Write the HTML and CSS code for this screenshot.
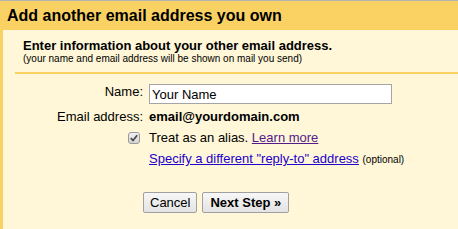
FILE: index.html
```html
<!DOCTYPE html>
<html lang="en">
<head>
    <meta charset="UTF-8">
    <title>Add another email address you own</title>
    <link rel="stylesheet" href="styles.css">
</head>
<body>
    <div class="dialog">
        <h1 class="dialog_title">Add another email address you own</h1>
        <div class="dialog_body">
            <div class="intro">
                <h2>Enter information about your other email address.</h2>
                <p>(your name and email address will be shown on mail you send)</p>
            </div>
            <form class="set_form">
                <label class="label" for="name">Name:</label>
                <div class="value">
                    <input type="text" id="name" class="txt_name" value="Your Name">
                </div>

                <span class="label">Email address:</span>
                <div class="value address">email@yourdomain.com</div>

                <span class="label">
                    <span class="check">
                        <svg width="12" height="12" viewBox="0 0 12 12">
                            <defs>
                                <linearGradient id="chk" x1="0" y1="0" x2="0" y2="1">
                                    <stop offset="0" stop-color="#f2f2f2"/>
                                    <stop offset="1" stop-color="#d4d4d4"/>
                                </linearGradient>
                            </defs>
                            <rect x="0.5" y="0.5" width="11" height="11" rx="2.5" fill="url(#chk)" stroke="#9a9a9a"/>
                            <path d="M2.8 6.2 L5 8.5 L9.2 3.3" fill="none" stroke="#4a4a4a" stroke-width="1.8"/>
                        </svg>
                    </span>
                </span>
                <div class="value">Treat as an alias. <a href="#" class="visited">Learn more</a></div>

                <span class="label"></span>
                <div class="value"><a href="#">Specify a different "reply-to" address</a> <small>(optional)</small></div>
            </form>
            <div class="line_submit">
                <button type="button">Cancel</button>
                <button type="button" class="next">Next Step &raquo;</button>
            </div>
        </div>
    </div>
</body>
</html>
```

FILE: styles.css
```css
html, body {
    margin: 0;
    height: 100%;
}
body {
    font-family: "Liberation Sans", Arial, sans-serif;
    font-size: 13px;
    color: #000;
    background-color: #fff7d7;
    border-top: 1px solid #b4b4b4;
    box-sizing: border-box;
}
.dialog {
    height: 100%;
    display: flex;
    flex-direction: column;
}
.dialog_title {
    margin: 0;
    height: 29px;
    line-height: 29px;
    padding-left: 7px;
    font-size: 16px;
    font-weight: bold;
    background-color: #fad163;
}
.dialog_body {
    flex: 1;
    border-left: 3px solid #fad163;
}
.intro {
    margin-left: 12px;
    padding: 8px 0 7px 8px;
    border-bottom: 2px solid #fad163;
}
.intro h2 {
    margin: 0;
    font-size: 13px;
    line-height: 15px;
    font-weight: bold;
}
.intro p {
    margin: 0;
    font-size: 10px;
    line-height: 12px;
}
.set_form {
    display: grid;
    grid-template-columns: 140px 1fr;
    column-gap: 6px;
    row-gap: 4px;
    margin-top: 10px;
    line-height: 17px;
}
.label {
    text-align: right;
}
.label[for] {
    margin-top: -1px;
}
.txt_name {
    display: block;
    width: 243px;
    height: 20px;
    box-sizing: border-box;
    margin: 0;
    padding: 1px 2px;
    border: 1px solid #a5a5a5;
    font-family: inherit;
    font-size: 13px;
    color: #000;
}
.address {
    font-weight: bold;
}
.check {
    display: inline-block;
    vertical-align: top;
    margin-top: 3px;
    margin-right: 3px;
    height: 12px;
}
.check svg {
    display: block;
}
a {
    color: #2200cc;
}
a.visited {
    color: #551a8b;
}
small {
    font-size: 10px;
}
.line_submit {
    margin: 24px 0 0 140px;
    display: flex;
    gap: 5px;
}
.line_submit button {
    height: 21px;
    padding: 0 6px;
    font-family: inherit;
    font-size: 13px;
    color: #000;
    border: 1px solid #a0a0a0;
    border-radius: 2px;
    background: linear-gradient(#f7f7f7, #e3e3e3);
}
.line_submit .next {
    font-weight: bold;
    padding: 0 7px;
}
```
